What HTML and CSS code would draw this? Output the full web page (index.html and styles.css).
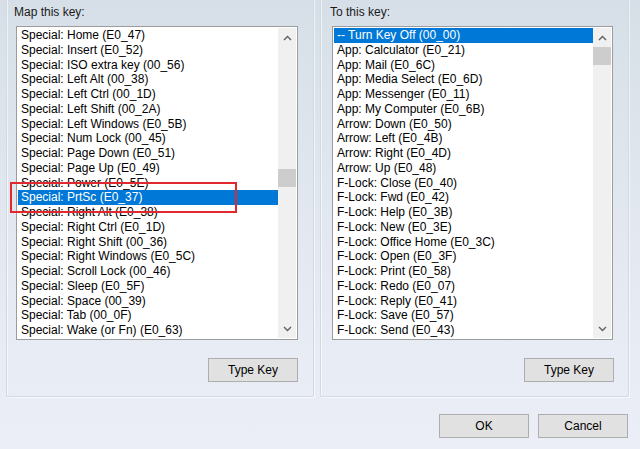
FILE: index.html
```html
<!DOCTYPE html>
<html lang="en">

<head>
    <meta charset="UTF-8">
    <title>Remap Key</title>
    <link rel="stylesheet" href="styles.css">
</head>

<body>
    <div class="dialog">
        <div class="panels">
            <!-- Source key -->
            <div class="panel panel-left">
                <div class="caption">Map this key:</div>
                <div class="listbox">
                    <div class="items">
                        <div class="item">Special: Home (E0_47)</div>
                        <div class="item">Special: Insert (E0_52)</div>
                        <div class="item">Special: ISO extra key (00_56)</div>
                        <div class="item">Special: Left Alt (00_38)</div>
                        <div class="item">Special: Left Ctrl (00_1D)</div>
                        <div class="item">Special: Left Shift (00_2A)</div>
                        <div class="item">Special: Left Windows (E0_5B)</div>
                        <div class="item">Special: Num Lock (00_45)</div>
                        <div class="item">Special: Page Down (E0_51)</div>
                        <div class="item">Special: Page Up (E0_49)</div>
                        <div class="item">Special: Power (E0_5E)</div>
                        <div class="item selected">Special: PrtSc (E0_37)</div>
                        <div class="item">Special: Right Alt (E0_38)</div>
                        <div class="item">Special: Right Ctrl (E0_1D)</div>
                        <div class="item">Special: Right Shift (00_36)</div>
                        <div class="item">Special: Right Windows (E0_5C)</div>
                        <div class="item">Special: Scroll Lock (00_46)</div>
                        <div class="item">Special: Sleep (E0_5F)</div>
                        <div class="item">Special: Space (00_39)</div>
                        <div class="item">Special: Tab (00_0F)</div>
                        <div class="item">Special: Wake (or Fn) (E0_63)</div>
                    </div>
                    <div class="scrollbar">
                        <div class="arrow">
                            <svg width="9" height="6" viewBox="0 0 9 6"><path d="M1 5 L4.5 1.5 L8 5" fill="none" stroke="#606060" stroke-width="1.4"/></svg>
                        </div>
                        <div class="track">
                            <div class="thumb thumb-left"></div>
                        </div>
                        <div class="arrow">
                            <svg width="9" height="6" viewBox="0 0 9 6"><path d="M1 1 L4.5 4.5 L8 1" fill="none" stroke="#606060" stroke-width="1.4"/></svg>
                        </div>
                    </div>
                    <div class="highlight-box"></div>
                </div>
                <div class="panel-buttons">
                    <button class="btn">Type Key</button>
                </div>
            </div>

            <!-- Target key -->
            <div class="panel panel-right">
                <div class="caption">To this key:</div>
                <div class="listbox">
                    <div class="items">
                        <div class="item selected">-- Turn Key Off (00_00)</div>
                        <div class="item">App: Calculator (E0_21)</div>
                        <div class="item">App: Mail (E0_6C)</div>
                        <div class="item">App: Media Select (E0_6D)</div>
                        <div class="item">App: Messenger (E0_11)</div>
                        <div class="item">App: My Computer (E0_6B)</div>
                        <div class="item">Arrow: Down (E0_50)</div>
                        <div class="item">Arrow: Left (E0_4B)</div>
                        <div class="item">Arrow: Right (E0_4D)</div>
                        <div class="item">Arrow: Up (E0_48)</div>
                        <div class="item">F-Lock: Close (E0_40)</div>
                        <div class="item">F-Lock: Fwd (E0_42)</div>
                        <div class="item">F-Lock: Help (E0_3B)</div>
                        <div class="item">F-Lock: New (E0_3E)</div>
                        <div class="item">F-Lock: Office Home (E0_3C)</div>
                        <div class="item">F-Lock: Open (E0_3F)</div>
                        <div class="item">F-Lock: Print (E0_58)</div>
                        <div class="item">F-Lock: Redo (E0_07)</div>
                        <div class="item">F-Lock: Reply (E0_41)</div>
                        <div class="item">F-Lock: Save (E0_57)</div>
                        <div class="item">F-Lock: Send (E0_43)</div>
                    </div>
                    <div class="scrollbar">
                        <div class="arrow">
                            <svg width="9" height="6" viewBox="0 0 9 6"><path d="M1 5 L4.5 1.5 L8 5" fill="none" stroke="#606060" stroke-width="1.4"/></svg>
                        </div>
                        <div class="track">
                            <div class="thumb thumb-right"></div>
                        </div>
                        <div class="arrow">
                            <svg width="9" height="6" viewBox="0 0 9 6"><path d="M1 1 L4.5 4.5 L8 1" fill="none" stroke="#606060" stroke-width="1.4"/></svg>
                        </div>
                    </div>
                </div>
                <div class="panel-buttons">
                    <button class="btn">Type Key</button>
                </div>
            </div>
        </div>

        <!-- Dialog buttons -->
        <div class="dialog-buttons">
            <button class="btn">OK</button>
            <button class="btn">Cancel</button>
        </div>
    </div>
</body>

</html>
```

FILE: styles.css
```css
body {
    margin: 0;
    font-family: "Liberation Sans", Arial, sans-serif;
    font-size: 12px;
    color: #000;
    background: linear-gradient(#d6dfe7, #e4e9f1 55%, #ebeef6);
    height: 449px;
    overflow: hidden;
}

.dialog {
    display: flex;
    flex-direction: column;
}

.panels {
    display: flex;
    gap: 6px;
    margin-top: -10px;
    padding-left: 6px;
}

.panel {
    display: flex;
    flex-direction: column;
    border: 1px solid #d2d9e1;
    border-radius: 2px;
    box-shadow: inset 1px 1px 0 rgba(255, 255, 255, 0.6), 1px 1px 0 rgba(255, 255, 255, 0.6);
    padding-top: 14px;
    padding-bottom: 14px;
}

.panel-left {
    width: 308px;
    box-sizing: border-box;
    padding-left: 9px;
}

.panel-right {
    width: 309px;
    box-sizing: border-box;
    padding-left: 11px;
}

.caption {
    line-height: 15px;
    margin-left: -2px;
    color: #1a1a1a;
}

.listbox {
    position: relative;
    display: flex;
    width: 282px;
    height: 314px;
    box-sizing: border-box;
    margin-top: 6px;
    border: 1px solid #9c9c9c;
    background: #fff;
    padding: 1px;
}

.panel-right .listbox {
    width: 281px;
}

.items {
    flex: 1;
    display: flex;
    flex-direction: column;
}

.item {
    height: 14.75px;
    line-height: 14.75px;
    padding-left: 3px;
    white-space: nowrap;
    overflow: hidden;
}

.item.selected {
    background: #0078d7;
    color: #fff;
}

.scrollbar {
    width: 18px;
    display: flex;
    flex-direction: column;
    background: #f0f0f0;
}

.arrow {
    height: 19px;
    display: flex;
    align-items: center;
    justify-content: center;
}

.track {
    flex: 1;
    display: flex;
    flex-direction: column;
}

.thumb {
    height: 18px;
    background: #cdcdcd;
}

.thumb-left {
    margin-top: 122px;
}

.thumb-right {
    margin-top: 0;
}

.highlight-box {
    position: absolute;
    left: -7px;
    top: 155px;
    width: 223px;
    height: 27px;
    border: 2px solid #e2282f;
}

.panel-buttons {
    display: flex;
    justify-content: flex-end;
    margin-top: 18px;
    width: 282px;
}

.btn {
    width: 90px;
    height: 24px;
    font-family: "Liberation Sans", Arial, sans-serif;
    font-size: 12px;
    color: #000;
    background: #e1e1e1;
    border: 1px solid #adadad;
    border-radius: 0;
    padding: 0;
}

.dialog-buttons {
    display: flex;
    justify-content: flex-end;
    gap: 9px;
    margin-top: 17px;
    padding-right: 12px;
}
```
